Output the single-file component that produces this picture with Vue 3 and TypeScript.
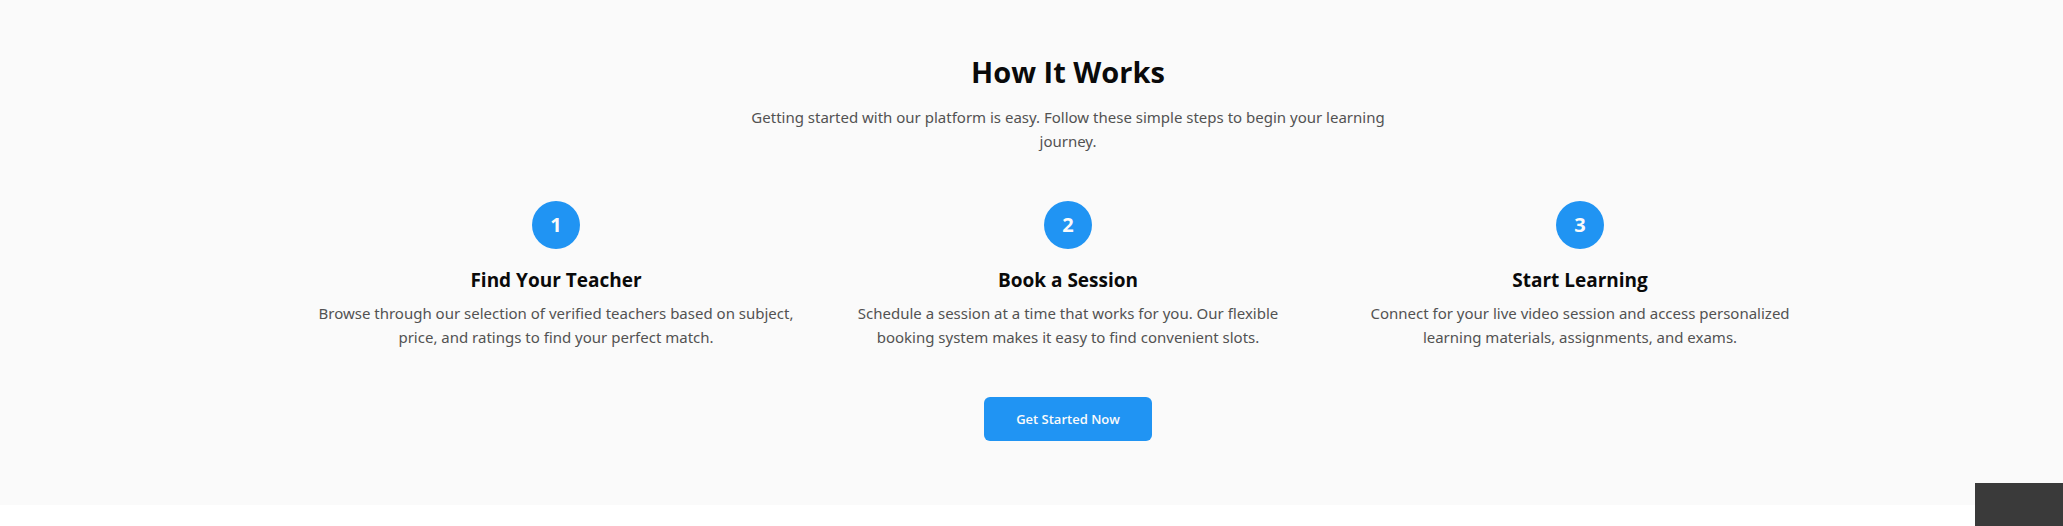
<script setup lang="ts">
interface Step {
  title: string
  text: string
}

const steps: Step[] = [
  {
    title: 'Find Your Teacher',
    text: 'Browse through our selection of verified teachers based on subject, price, and ratings to find your perfect match.',
  },
  {
    title: 'Book a Session',
    text: 'Schedule a session at a time that works for you. Our flexible booking system makes it easy to find convenient slots.',
  },
  {
    title: 'Start Learning',
    text: 'Connect for your live video session and access personalized learning materials, assignments, and exams.',
  },
]
</script>

<template>
  <section class="how">
    <div class="container">
      <header class="intro">
        <h2>How It Works</h2>
        <p>Getting started with our platform is easy. Follow these simple steps to begin your learning journey.</p>
      </header>
      <ol class="steps">
        <li v-for="(step, i) in steps" :key="step.title" class="step">
          <span class="number">{{ i + 1 }}</span>
          <h3>{{ step.title }}</h3>
          <p>{{ step.text }}</p>
        </li>
      </ol>
      <button type="button" class="cta">Get Started Now</button>
    </div>
  </section>
  <aside class="panel" aria-hidden="true"></aside>
</template>

<style>
body {
  margin: 0;
  background: #fff;
}
</style>

<style scoped>
.how {
  padding: 54px 0 64px 73px;
  background: #fafafa;
  font-family: "Segoe UI", "Open Sans", "Noto Sans", sans-serif;
  color: #0a0a0a;
  text-align: center;
}

.container {
  box-sizing: border-box;
  max-width: 1536px;
  margin: 0 auto;
  padding: 0 16px;
}

h2,
h3,
p {
  margin: 0;
}

p {
  font-family: "Segoe UI", "Noto Sans", "Open Sans", sans-serif;
  font-size: 15px;
  line-height: 24px;
  color: #525252;
}

.intro {
  max-width: 672px;
  margin: 0 auto 48px;
}

h2 {
  margin-bottom: 15px;
  font-size: 29px;
  line-height: 36px;
  font-weight: 700;
}

.steps {
  display: grid;
  grid-template-columns: repeat(3, 1fr);
  gap: 32px;
  margin: 0 0 48px;
  padding: 0;
  list-style: none;
}

.step {
  display: flex;
  flex-direction: column;
  align-items: center;
}

.number {
  display: flex;
  align-items: center;
  justify-content: center;
  width: 48px;
  height: 48px;
  margin-bottom: 16px;
  border-radius: 50%;
  background: #2094f3;
  color: #fafafa;
  font-size: 20px;
  line-height: 28px;
  font-weight: 700;
}

h3 {
  margin-bottom: 6px;
  font-size: 19px;
  line-height: 30px;
  font-weight: 700;
}

.cta {
  display: block;
  height: 44px;
  margin: 0 auto;
  padding: 0 32px;
  border: 0;
  border-radius: 6px;
  background: #2094f3;
  color: #fafafa;
  font-family: inherit;
  font-size: 13px;
  line-height: 20px;
  font-weight: 600;
}

.panel {
  position: fixed;
  right: 0;
  bottom: 0;
  width: 88px;
  height: 43px;
  background: #3a3a3a;
}
</style>
